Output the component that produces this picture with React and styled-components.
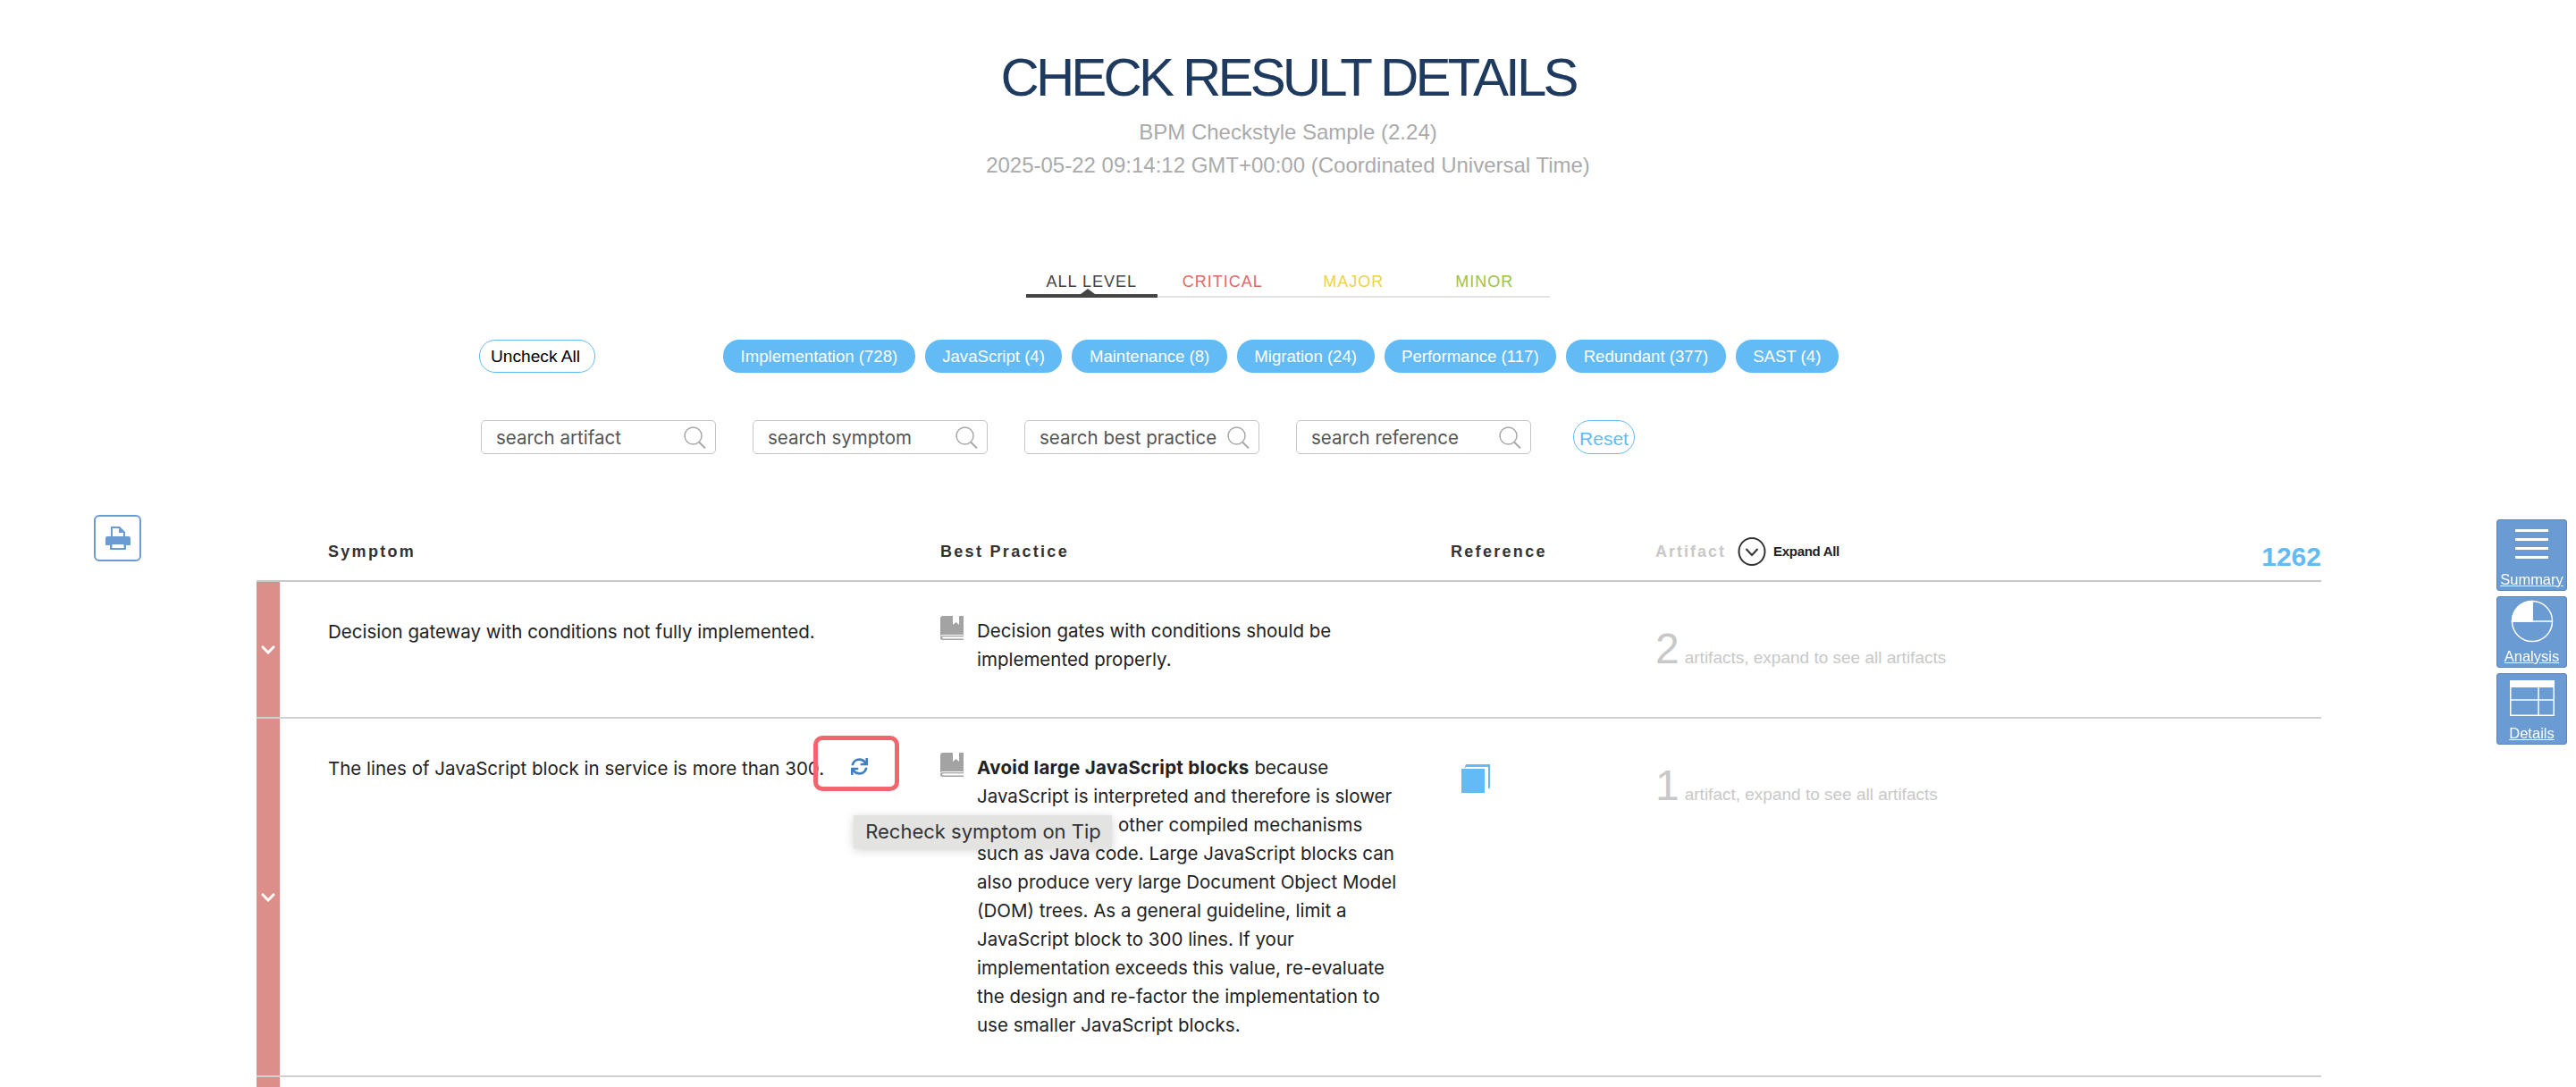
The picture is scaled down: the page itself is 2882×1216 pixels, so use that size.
import React from 'react';
import styled, { createGlobalStyle } from 'styled-components';
import { FaChevronDown, FaSync } from 'react-icons/fa';

const HELV = '"Liberation Sans", Arial, sans-serif';
const BODY = 'Inter, "Liberation Sans", sans-serif';
const BLUE = '#62bbf4';
const STEEL = '#6a9bd3';

const GlobalStyle = createGlobalStyle`
  html, body {
    margin: 0;
    height: 1216px;
    overflow: hidden;
    background: #fff;
    font-family: ${BODY};
  }
  * { box-sizing: border-box; }
`;

const Page = styled.div`
  display: flex;
  flex-direction: column;
  padding-top: 57px;
`;

const Title = styled.h1`
  margin: 0;
  text-align: center;
  font: 400 60px/60px ${HELV};
  letter-spacing: -3.85px;
  color: #1f3a5f;
`;

const SubTitle = styled.div`
  margin-top: 12px;
  text-align: center;
  font: 400 24px/37px ${HELV};
  color: #aaa;
`;

const Tabs = styled.div`
  display: flex;
  align-self: center;
  margin-top: 92px;
  border-bottom: 2px solid #e2e2e2;
`;

const Tab = styled.div`
  position: relative;
  width: 146.5px;
  height: 38px;
  margin-bottom: -2px;
  padding-top: 10px;
  text-align: center;
  font: 400 18px/20px ${HELV};
  letter-spacing: 1px;
  color: ${(p) => p.$color};
  border-bottom: ${(p) => (p.$active ? '4px solid #444' : 'none')};
  &::after {
    content: ${(p) => (p.$active ? '""' : 'none')};
    position: absolute;
    left: 61px;
    bottom: 0;
    border: 8px solid transparent;
    border-top: 0;
    border-bottom: 6px solid #444;
  }
`;

const FilterRow = styled.div`
  display: flex;
  align-items: center;
  margin: 47px 0 0 536px;
`;

const UncheckAll = styled.div`
  width: 130px;
  height: 37px;
  margin-right: 143px;
  padding-right: 4px;
  border: 1px solid ${BLUE};
  border-radius: 18px;
  text-align: center;
  font: 400 19.200px/35px ${HELV};
  color: #000;
`;

const Pills = styled.div`
  display: flex;
  gap: 11px;
`;

const Pill = styled.div`
  height: 37px;
  padding: 0 19.500px;
  border-radius: 18px;
  background: ${BLUE};
  font: 400 18.600px/37px ${HELV};
  color: #fff;
`;

const SearchRow = styled.div`
  display: flex;
  align-items: center;
  gap: 41px;
  margin: 53px 0 0 538px;
`;

const SearchBox = styled.div`
  display: flex;
  align-items: center;
  width: 263px;
  height: 38px;
  padding: 0 10px 0 16px;
  border: 1px solid #c4c4c4;
  border-radius: 5px;
`;

const SearchInput = styled.input`
  flex: 1;
  min-width: 0;
  padding: 0;
  border: 0;
  outline: 0;
  background: none;
  font: 400 20.500px ${BODY};
  &::placeholder {
    color: #555;
    opacity: 1;
  }
`;

const ResetButton = styled.div`
  width: 69px;
  height: 38px;
  margin-left: 6px;
  border: 1px solid ${BLUE};
  border-radius: 19px;
  text-align: center;
  font: 400 21px/40px ${HELV};
  color: ${BLUE};
`;

const Content = styled.div`
  display: flex;
  align-items: flex-start;
  margin-top: 68px;
  padding-left: 105px;
`;

const PrintButton = styled.div`
  display: flex;
  align-items: center;
  justify-content: center;
  flex: none;
  width: 53px;
  height: 52px;
  margin-right: 129px;
  border: 2px solid ${STEEL};
  border-radius: 6px;
`;

const Table = styled.div`
  width: 2310px;
`;

const columns = '26px 739px 571px 229px 745px';

const HeadRow = styled.div`
  display: grid;
  grid-template-columns: ${columns};
  align-items: center;
  height: 75px;
  padding-top: 9px;
  border-bottom: 2px solid #c8c8c8;
`;

const HeadCell = styled.div`
  grid-column: ${(p) => p.$col};
  padding-left: ${(p) => p.$pad || 0}px;
  font: 700 18px/24px ${HELV};
  letter-spacing: 2.300px;
  color: #333;
`;

const ArtifactHead = styled.div`
  grid-column: 5;
  display: flex;
  align-items: center;
`;

const ArtifactLabel = styled.span`
  font: 700 18px/24px ${HELV};
  letter-spacing: 2px;
  color: #c8c8c8;
`;

const ExpandAll = styled.span`
  margin-left: 8px;
  font: 700 15px/24px ${HELV};
  letter-spacing: -0.3px;
  color: #222;
`;

const Total = styled.span`
  margin-left: auto;
  margin-top: 12px;
  font: 700 30px/30px ${HELV};
  color: ${BLUE};
`;

const Row = styled.div`
  display: grid;
  grid-template-columns: ${columns};
  align-items: start;
  min-height: ${(p) => p.$minHeight}px;
  border-bottom: ${(p) => (p.$last ? 'none' : '2px solid #d0d0d0')};
`;

const Strip = styled.div`
  align-self: stretch;
  display: flex;
  align-items: center;
  justify-content: center;
  background: #dc8f8a;
  color: #fff;
`;

const Symptom = styled.div`
  padding: 40px 0 0 54px;
  font: 400 20.500px/32px ${BODY};
  color: #222;
`;

const Recheck = styled.span`
  position: relative;
  display: inline-block;
  width: 0;
  height: 0;
`;

const RecheckIcon = styled.span`
  position: absolute;
  left: 30px;
  top: -19px;
  color: #3f7fc4;
  font-size: 19px;
  line-height: 19px;
`;

const Highlight = styled.span`
  position: absolute;
  left: -12px;
  top: -44px;
  width: 96px;
  height: 62px;
  border: 5px solid #f0656e;
  border-radius: 10px;
`;

const Tooltip = styled.div`
  position: absolute;
  left: 33px;
  top: 45px;
  z-index: 2;
  width: 289px;
  height: 37px;
  padding-left: 13px;
  background: #e3e3e1;
  box-shadow: 0 2px 10px rgba(0, 0, 0, 0.18);
  font: 400 22px/37px ${BODY};
  white-space: nowrap;
  color: #333;
`;

const Practice = styled.div`
  display: flex;
  gap: 15px;
  padding-top: 39px;
`;

const PracticeText = styled.div`
  width: 476px;
  font: 400 20.500px/32px ${BODY};
  color: #222;
  b {
    font-weight: 700;
    letter-spacing: 0.3px;
  }
`;

// the start of this line is covered by the tooltip in the picture
const CoveredByTooltip = styled.span`
  display: inline-block;
  width: 158px;
`;

const ReferenceCell = styled.div`
  padding: 51px 0 0 12px;
`;

const ArtifactCell = styled.div`
  padding-top: ${(p) => p.$top}px;
  font: 400 19px/48px ${HELV};
  color: #c8c8c8;
`;

const BigCount = styled.span`
  margin-right: 6px;
  font-size: 48px;
`;

const SideNav = styled.nav`
  position: fixed;
  left: 2793px;
  top: 581px;
  display: flex;
  flex-direction: column;
  gap: 6px;
`;

const SideCard = styled.a`
  display: flex;
  flex-direction: column;
  align-items: center;
  width: 79px;
  height: 80px;
  border: 1px solid #5a86bb;
  border-radius: 3px;
  background: ${STEEL};
`;

const SideIcon = styled.svg`
  display: block;
  flex: none;
  margin-top: ${(p) => p.$top}px;
`;

const SideLabel = styled.span`
  margin-top: auto;
  margin-bottom: 3px;
  font: 400 16.500px/18px ${HELV};
  text-decoration: underline;
  color: #fff;
`;

const PrintIcon = () => (
  <svg width="28" height="26" viewBox="0 0 28 26" fill={STEEL}>
    <path d="M6 0h10l6 6v7H6z M8 2v9h12V7h-5V2z" fillRule="evenodd" />
    <path d="M2 11h24a2 2 0 0 1 2 2v7a1 1 0 0 1-1 1h-4v-4H5v4H1a1 1 0 0 1-1-1v-7a2 2 0 0 1 2-2z" />
    <path d="M5 17h18v9H5z M7.500 20v4h13v-4z" fillRule="evenodd" />
  </svg>
);

const MagnifierIcon = () => (
  <svg width="25" height="25" viewBox="0 0 25 25" fill="none" stroke="#a8a8a8" strokeWidth="1.500">
    <circle cx="10.500" cy="10.500" r="9.500" />
    <path d="M17 17.500l7 7" strokeWidth="2" />
  </svg>
);

const BookIcon = () => (
  <svg width="26" height="27" viewBox="0 0 26 27" style={{ flex: 'none', marginTop: -1 }}>
    <path d="M3 0h11v10l3.500-3 3.500 3V0h5v21H3a3 3 0 0 0-3 1.500V3a3 3 0 0 1 3-3z" fill="#a3a3a3" />
    <path d="M2.500 22H26v1.200H3a1.200 1.200 0 0 0 0 2.300h23V27H2.500a2.500 2.500 0 0 1 0-5z" fill="#a3a3a3" />
  </svg>
);

const ReferenceBook = () => (
  <svg width="32" height="32" viewBox="0 0 32 32" fill={BLUE}>
    <path d="M5 0h27v26l-2 2V3H5L3 5z" />
    <path d="M0 5h26v27H0z" />
  </svg>
);

const ExpandIcon = () => (
  <svg width="32" height="32" viewBox="0 0 32 32" fill="none" stroke="#333" strokeWidth="2" style={{ marginLeft: 13 }}>
    <ellipse cx="16" cy="16" rx="14.500" ry="15" />
    <path d="M9.500 13l6.500 7 6.500-7" />
  </svg>
);

const SummaryIcon = () => (
  <SideIcon $top={10} width="37" height="33" viewBox="0 0 37 33" fill="#fff">
    <rect y="0" width="37" height="3" />
    <rect y="10" width="37" height="3" />
    <rect y="20" width="37" height="3" />
    <rect y="30" width="37" height="3" />
  </SideIcon>
);

const AnalysisIcon = () => (
  <SideIcon $top={3} width="48" height="48" viewBox="0 0 48 48" fill="none" stroke="#fff" strokeWidth="1.500">
    <circle cx="24" cy="24" r="22.500" />
    <path d="M24 1.500V24M1.500 24h45" />
    <path d="M24 1.500V24H1.500A22.500 22.500 0 0 1 24 1.500z" fill="#fff" />
  </SideIcon>
);

const DetailsIcon = () => (
  <SideIcon $top={7} width="50" height="40" viewBox="0 0 50 40" fill="none" stroke="#fff" strokeWidth="1.500">
    <rect x="0.750" y="0.750" width="48.500" height="38.500" />
    <rect x="0" y="0" width="50" height="8" fill="#fff" stroke="none" />
    <path d="M0 22h50M32 8v32" />
  </SideIcon>
);

const levels = [
  { label: 'ALL LEVEL', color: '#444', active: true },
  { label: 'CRITICAL', color: '#dc6b68' },
  { label: 'MAJOR', color: '#ecd24f' },
  { label: 'MINOR', color: '#9cc24a' },
];

const categories = [
  'Implementation (728)',
  'JavaScript (4)',
  'Maintenance (8)',
  'Migration (24)',
  'Performance (117)',
  'Redundant (377)',
  'SAST (4)',
];

const searches = ['search artifact', 'search symptom', 'search best practice', 'search reference'];

export default function App() {
  return (
    <Page>
      <GlobalStyle />
      <Title>CHECK RESULT DETAILS</Title>
      <SubTitle>
        BPM Checkstyle Sample (2.24)
        <br />
        2025-05-22 09:14:12 GMT+00:00 (Coordinated Universal Time)
      </SubTitle>

      <Tabs>
        {levels.map((l) => (
          <Tab key={l.label} $color={l.color} $active={l.active}>{l.label}</Tab>
        ))}
      </Tabs>

      <FilterRow>
        <UncheckAll>Uncheck All</UncheckAll>
        <Pills>
          {categories.map((c) => <Pill key={c}>{c}</Pill>)}
        </Pills>
      </FilterRow>

      <SearchRow>
        {searches.map((s) => (
          <SearchBox key={s}>
            <SearchInput placeholder={s} />
            <MagnifierIcon />
          </SearchBox>
        ))}
        <ResetButton>Reset</ResetButton>
      </SearchRow>

      <Content>
        <PrintButton><PrintIcon /></PrintButton>
        <Table>
          <HeadRow>
            <HeadCell $col={2} $pad={54}>Symptom</HeadCell>
            <HeadCell $col={3}>Best Practice</HeadCell>
            <HeadCell $col={4}>Reference</HeadCell>
            <ArtifactHead>
              <ArtifactLabel>Artifact</ArtifactLabel>
              <ExpandIcon />
              <ExpandAll>Expand All</ExpandAll>
              <Total>1262</Total>
            </ArtifactHead>
          </HeadRow>

          <Row $minHeight={153}>
            <Strip><FaChevronDown size={18} /></Strip>
            <Symptom>Decision gateway with conditions not fully implemented.</Symptom>
            <Practice>
              <BookIcon />
              <PracticeText>Decision gates with conditions should be implemented properly.</PracticeText>
            </Practice>
            <div />
            <ArtifactCell $top={51}><BigCount>2</BigCount>artifacts, expand to see all artifacts</ArtifactCell>
          </Row>

          <Row $minHeight={401}>
            <Strip><FaChevronDown size={18} /></Strip>
            <Symptom>
              The lines of JavaScript block in service is more than 300.
              <Recheck>
                <Highlight />
                <RecheckIcon><FaSync /></RecheckIcon>
                <Tooltip>Recheck symptom on Tip</Tooltip>
              </Recheck>
            </Symptom>
            <Practice>
              <BookIcon />
              <PracticeText>
                <b>Avoid large JavaScript blocks</b> because JavaScript is interpreted and therefore is slower <CoveredByTooltip />other compiled mechanisms such as Java code. Large JavaScript blocks can also produce very large Document Object Model (DOM) trees. As a general guideline, limit a JavaScript block to 300 lines. If your implementation exceeds this value, re-evaluate the design and re-factor the implementation to use smaller JavaScript blocks.
              </PracticeText>
            </Practice>
            <ReferenceCell><ReferenceBook /></ReferenceCell>
            <ArtifactCell $top={51}><BigCount>1</BigCount>artifact, expand to see all artifacts</ArtifactCell>
          </Row>

          <Row $minHeight={11} $last>
            <Strip />
          </Row>
        </Table>
      </Content>

      <SideNav>
        <SideCard><SummaryIcon /><SideLabel>Summary</SideLabel></SideCard>
        <SideCard><AnalysisIcon /><SideLabel>Analysis</SideLabel></SideCard>
        <SideCard><DetailsIcon /><SideLabel>Details</SideLabel></SideCard>
      </SideNav>
    </Page>
  );
}
